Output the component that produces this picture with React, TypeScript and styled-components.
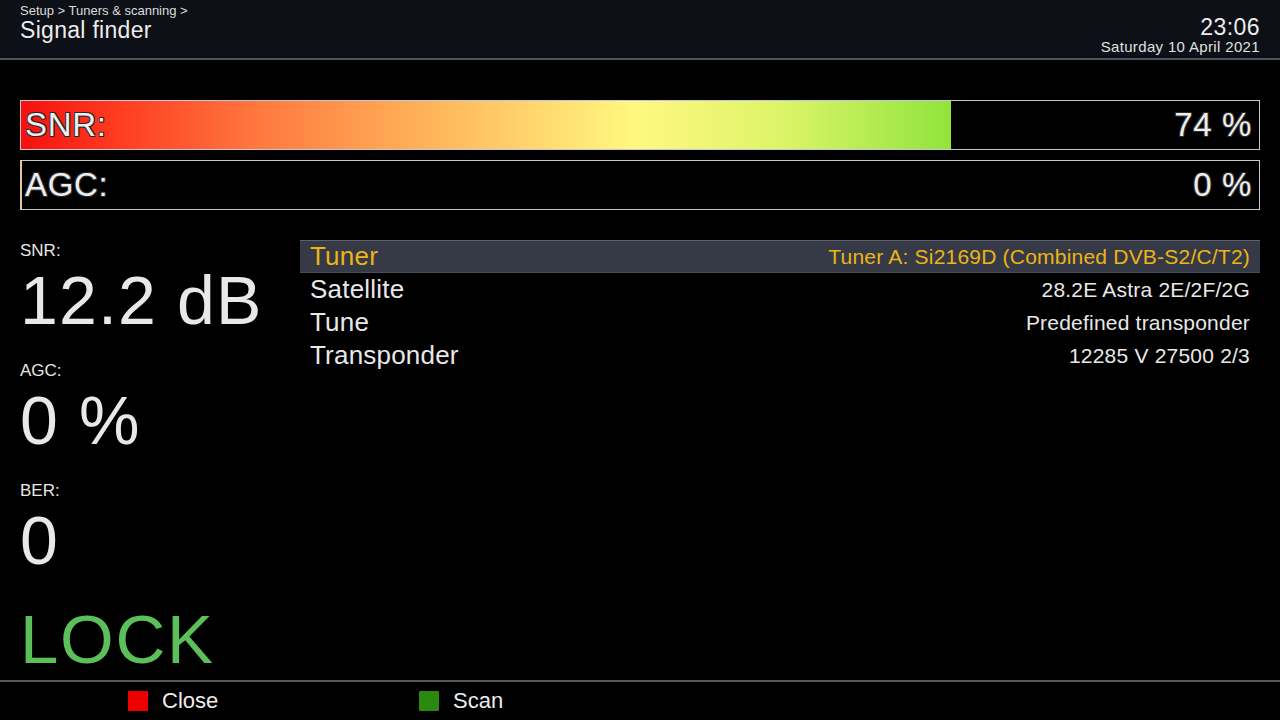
import React from "react";
import styled, { createGlobalStyle } from "styled-components";

const Global = createGlobalStyle`
  html, body { margin: 0; padding: 0; background: #000; }
  body { font-family: "Liberation Sans", Arial, sans-serif; color: #e8e8e8; overflow: hidden; }
  * { box-sizing: border-box; }
`;

const Screen = styled.div`
  width: 1280px;
  height: 720px;
  display: flex;
  flex-direction: column;
  background: #000;
`;

const Header = styled.header`
  height: 60px;
  flex: none;
  background: #0d1017;
  border-bottom: 2px solid #50545c;
  display: flex;
  justify-content: space-between;
  padding: 0 20px;
`;

const TitleBlock = styled.div`
  padding-top: 3px;
  display: flex;
  flex-direction: column;
`;

const Crumb = styled.div`
  font-size: 13px;
  line-height: 15px;
  color: #dcdcdc;
`;

const Title = styled.div`
  font-size: 23px;
  line-height: 24px;
  letter-spacing: 0.013em;
  color: #ececec;
`;

const Clock = styled.div`
  padding-top: 15px;
  display: flex;
  flex-direction: column;
  align-items: flex-end;
`;

const Time = styled.div`
  font-size: 23px;
  line-height: 24px;
  letter-spacing: 0.02em;
  color: #ececec;
`;

const DateText = styled.div`
  font-size: 15px;
  line-height: 16px;
  letter-spacing: 0.023em;
  color: #e0e0e0;
`;

const Main = styled.main`
  flex: 1;
  padding: 40px 20px 0;
  display: flex;
  flex-direction: column;
`;

const Bars = styled.div`
  display: flex;
  flex-direction: column;
  gap: 10px;
`;

const Bar = styled.div`
  position: relative;
  height: 50px;
  border: 1px solid #c8c8c8;
  background: #000;
`;

const Fill = styled.div`
  position: absolute;
  left: 0;
  top: 0;
  bottom: 0;
  background: linear-gradient(
    to right,
    #f51010 0%,
    #ff3a20 10%,
    #ff7a40 26%,
    #ffb45a 44%,
    #fff880 66%,
    #dcf468 82%,
    #90e43c 100%
  );
`;

const BarText = styled.div`
  position: relative;
  height: 100%;
  display: flex;
  align-items: center;
  justify-content: space-between;
  padding: 0 7px 0 4px;
  font-size: 33px;
  line-height: 48px;
  letter-spacing: 0.02em;
  color: #eeeeee;
  text-shadow: -1px -1px 0 #2a2a2a, 1px -1px 0 #2a2a2a, -1px 1px 0 #2a2a2a,
    1px 1px 0 #2a2a2a;
`;

const Content = styled.div`
  margin-top: 30px;
  display: flex;
`;

const Stats = styled.div`
  width: 280px;
  flex: none;
  display: flex;
  flex-direction: column;
`;

const Stat = styled.div`
  height: 120px;
  display: flex;
  flex-direction: column;
`;

const StatLabel = styled.div`
  margin-top: 2px;
  font-size: 17px;
  line-height: 18px;
  color: #e6e6e6;
`;

const StatValue = styled.div`
  margin-top: 5px;
  font-size: 68px;
  line-height: 70px;
  letter-spacing: 0.017em;
  color: #e8e8e8;
`;

const Lock = styled.div`
  margin-top: 5px;
  font-size: 69px;
  line-height: 70px;
  letter-spacing: 0.025em;
  color: #5cc05a;
`;

const List = styled.div`
  flex: 1;
  display: flex;
  flex-direction: column;
`;

const Row = styled.div<{ $active?: boolean }>`
  height: 33px;
  display: flex;
  align-items: center;
  justify-content: space-between;
  padding: 0 10px;
  background: ${(p) => (p.$active ? "#363946" : "transparent")};
  border-top: 1px solid ${(p) => (p.$active ? "#5f6270" : "transparent")};
  border-bottom: 1px solid ${(p) => (p.$active ? "#4a4d5a" : "transparent")};
  color: ${(p) => (p.$active ? "#ecb416" : "#e8e8e8")};
`;

const RowLabel = styled.span`
  font-size: 26px;
  line-height: 31px;
  letter-spacing: 0.008em;
`;

const RowValue = styled.span`
  font-size: 21px;
  line-height: 31px;
  letter-spacing: 0.01em;
`;

const Footer = styled.footer`
  height: 40px;
  flex: none;
  border-top: 2px solid #55585f;
  display: flex;
  align-items: center;
  padding-left: 128px;
`;

const Key = styled.div`
  width: 291px;
  display: flex;
  align-items: center;
  gap: 14px;
  font-size: 22px;
  line-height: 26px;
  color: #ececec;
`;

const Swatch = styled.span<{ $color: string }>`
  width: 20px;
  height: 20px;
  border-radius: 1px;
  background: ${(p) => p.$color};
`;

const rows = [
  { label: "Tuner", value: "Tuner A: Si2169D (Combined DVB-S2/C/T2)", active: true },
  { label: "Satellite", value: "28.2E Astra 2E/2F/2G" },
  { label: "Tune", value: "Predefined transponder" },
  { label: "Transponder", value: "12285 V 27500 2/3" },
];

export default function App() {
  const snr = 74;
  const agc = 0;
  return (
    <Screen>
      <Global />
      <Header>
        <TitleBlock>
          <Crumb>Setup &gt; Tuners &amp; scanning &gt;</Crumb>
          <Title>Signal finder</Title>
        </TitleBlock>
        <Clock>
          <Time>23:06</Time>
          <DateText>Saturday 10 April 2021</DateText>
        </Clock>
      </Header>
      <Main>
        <Bars>
          <Bar>
            <Fill style={{ width: `${snr * 1.015}%` }} />
            <BarText>
              <span>SNR:</span>
              <span>{snr} %</span>
            </BarText>
          </Bar>
          <Bar>
            <Fill style={{ width: agc === 0 ? "1px" : `${agc}%` }} />
            <BarText>
              <span>AGC:</span>
              <span>{agc} %</span>
            </BarText>
          </Bar>
        </Bars>
        <Content>
          <Stats>
            <Stat>
              <StatLabel>SNR:</StatLabel>
              <StatValue>12.2 dB</StatValue>
            </Stat>
            <Stat>
              <StatLabel>AGC:</StatLabel>
              <StatValue>0 %</StatValue>
            </Stat>
            <Stat>
              <StatLabel>BER:</StatLabel>
              <StatValue>0</StatValue>
            </Stat>
            <Lock>LOCK</Lock>
          </Stats>
          <List>
            {rows.map((r) => (
              <Row key={r.label} $active={r.active}>
                <RowLabel>{r.label}</RowLabel>
                <RowValue>{r.value}</RowValue>
              </Row>
            ))}
          </List>
        </Content>
      </Main>
      <Footer>
        <Key>
          <Swatch $color="#ee0000" />
          Close
        </Key>
        <Key>
          <Swatch $color="#2a8a10" />
          Scan
        </Key>
      </Footer>
    </Screen>
  );
}
